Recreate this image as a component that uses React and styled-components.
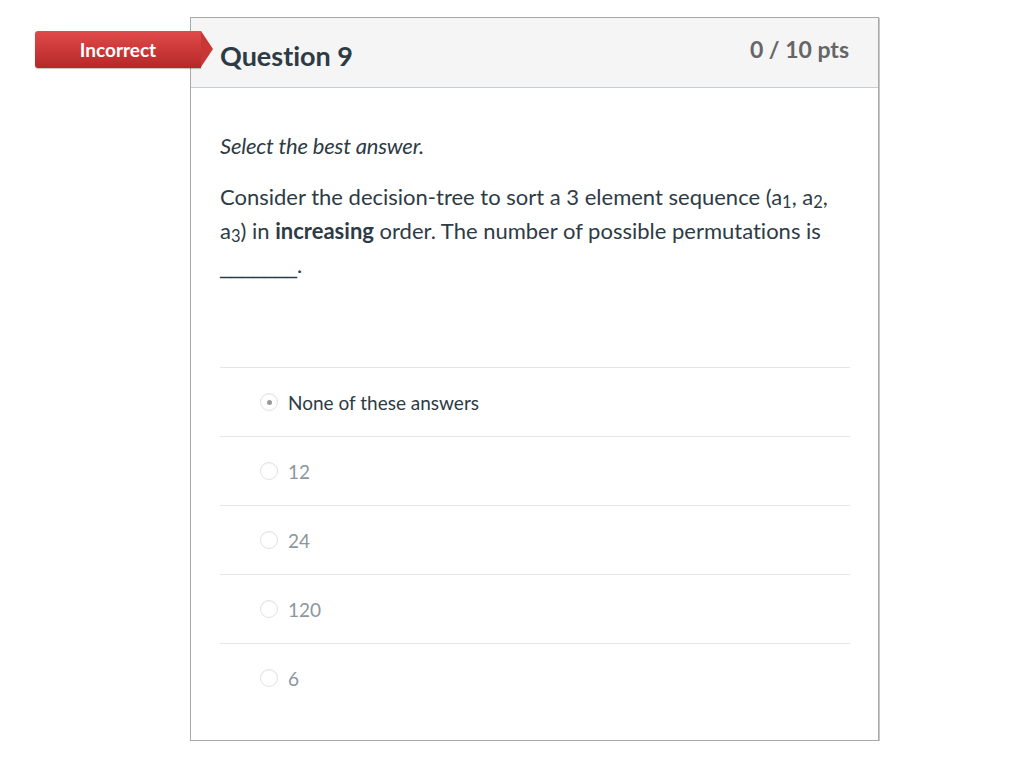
import React from "react";
import styled, { createGlobalStyle } from "styled-components";

const Global = createGlobalStyle`
  html, body { margin: 0; padding: 0; background: #fff; }
  body {
    font-family: Lato, "Open Sans", "Liberation Sans", sans-serif;
    color: #2d3b45;
    font-variant-ligatures: none;
    font-feature-settings: "liga" 0;
  }
`;

const Page = styled.div`
  padding: 17px 0 0 190px;
`;

const Card = styled.div`
  position: relative;
  width: 687px;
  border: 1px solid #a9a9a9;
  box-shadow: 1px 1px 0 #c8c8c8;
  background: #fff;
`;

const Badge = styled.div`
  position: absolute;
  left: -156px;
  top: 13px;
  width: 166px;
  height: 37px;
  box-sizing: border-box;
  display: flex;
  align-items: center;
  justify-content: center;
  color: #fff;
  font-weight: 700;
  font-size: 19px;
  background: linear-gradient(#e24a4a, #b52828);
  border-radius: 3px 0 0 3px;
  box-shadow: 0 1px 1px rgba(0,0,0,0.25);
  &::after {
    content: "";
    position: absolute;
    right: -12px;
    top: 0;
    width: 0;
    height: 0;
    border-top: 18.5px solid transparent;
    border-bottom: 18.5px solid transparent;
    border-left: 12px solid #c93636;
  }
`;

const Header = styled.div`
  height: 70px;
  box-sizing: border-box;
  background: #f5f5f5;
  border-bottom: 1px solid #c7cdd1;
  display: flex;
  justify-content: space-between;
  align-items: flex-start;
  padding: 0 29px;
`;

const Title = styled.h2`
  margin: 0;
  padding-top: 22px;
  font-size: 27px;
  font-weight: 700;
  color: #2d3b45;
  line-height: 32px;
`;

const Points = styled.div`
  padding-top: 16px;
  font-size: 23px;
  font-weight: 700;
  color: #666;
  line-height: 30px;
`;

const Body = styled.div`
  padding: 0 28px 0 29px;
`;

const Prompt = styled.p`
  margin: 0;
  padding-top: 43px;
  font-size: 22px;
  font-style: italic;
  line-height: 30px;
  letter-spacing: -0.2px;
`;

const QuestionText = styled.p`
  margin: 19px 0 0;
  font-size: 22px;
  line-height: 34px;
  sub { font-size: 0.75em; vertical-align: -0.2em; line-height: 1; }
`;

const Blank = styled.span`
  font-family: "DejaVu Sans", sans-serif;
  font-size: 22px;
`;

const Answers = styled.div`
  margin-top: 84px;
  padding-bottom: 28px;
`;

const Row = styled.div`
  height: 69px;
  box-sizing: border-box;
  border-top: 1px solid #e4e7e9;
  display: flex;
  align-items: center;
  padding-left: 40px;
  gap: 10px;
  font-size: 19px;
  color: ${(p) => (p.$selected ? "#2d3b45" : "#8b969e")};
`;

const Radio = styled.span`
  width: 16px;
  height: 16px;
  border-radius: 50%;
  border: 1px solid #e2e2e2;
  background: #fff;
  display: inline-flex;
  align-items: center;
  justify-content: center;
  box-shadow: inset 0 1px 1px rgba(0,0,0,0.04);
  &::after {
    content: "";
    width: 5px;
    height: 5px;
    border-radius: 50%;
    background: ${(p) => (p.$checked ? "#9a9a9a" : "transparent")};
  }
`;

const answers = [
  { text: "None of these answers", selected: true },
  { text: "12" },
  { text: "24" },
  { text: "120" },
  { text: "6" },
];

export default function App() {
  return (
    <Page>
      <Global />
      <Card>
        <Badge>Incorrect</Badge>
        <Header>
          <Title>Question 9</Title>
          <Points>0 / 10 pts</Points>
        </Header>
        <Body>
          <Prompt>Select the best answer.</Prompt>
          <QuestionText>
            Consider the decision-tree to sort a 3 element sequence (a<sub>1</sub>, a<sub>2</sub>,
            a<sub>3</sub>) in <strong>increasing</strong> order. The number of possible permutations is{" "}
            <Blank>_______</Blank>.
          </QuestionText>
          <Answers>
            {answers.map((a) => (
              <Row key={a.text} $selected={a.selected}>
                <Radio $checked={a.selected} />
                {a.text}
              </Row>
            ))}
          </Answers>
        </Body>
      </Card>
    </Page>
  );
}
